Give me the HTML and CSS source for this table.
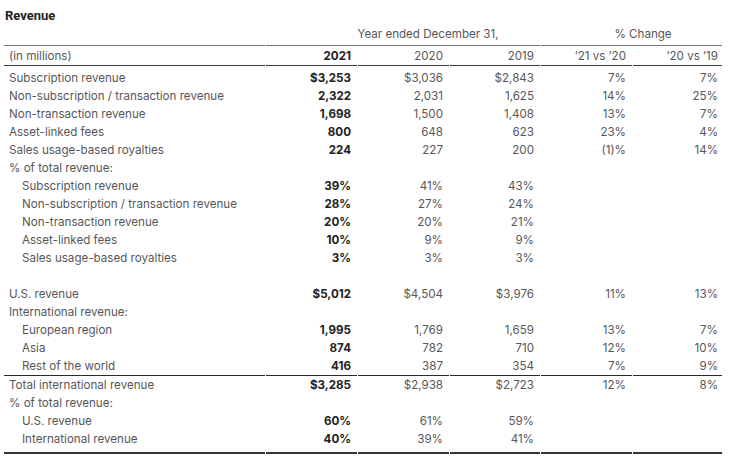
FILE: index.html
```html
<!DOCTYPE html>
<html lang="en">
<head>
<meta charset="utf-8">
<title>Revenue</title>
<link rel="stylesheet" href="styles.css">
</head>
<body>
<div class="page">
  <h1 class="title">Revenue</h1>
  <table class="fin">
    <colgroup>
      <col class="c-label"><col class="c-a"><col class="c-a"><col class="c-b"><col class="c-a"><col class="c-c">
    </colgroup>
    <thead>
      <tr class="group-row">
        <th></th>
        <th colspan="3" class="center years">Year ended December 31,</th>
        <th colspan="2" class="center change">% Change</th>
      </tr>
      <tr class="year-row">
        <th class="label">(in millions)</th>
        <th class="bold">2021</th>
        <th>2020</th>
        <th>2019</th>
        <th>’21 vs ’20</th>
        <th>’20 vs ’19</th>
      </tr>
    </thead>
    <tbody>
      <tr class="first"><td class="label">Subscription revenue</td><td class="bold">$3,253</td><td>$3,036</td><td>$2,843</td><td>7%</td><td>7%</td></tr>
      <tr><td class="label">Non-subscription / transaction revenue</td><td class="bold">2,322</td><td>2,031</td><td>1,625</td><td>14%</td><td>25%</td></tr>
      <tr><td class="label">Non-transaction revenue</td><td class="bold">1,698</td><td>1,500</td><td>1,408</td><td>13%</td><td>7%</td></tr>
      <tr><td class="label">Asset-linked fees</td><td class="bold">800</td><td>648</td><td>623</td><td>23%</td><td>4%</td></tr>
      <tr><td class="label">Sales usage-based royalties</td><td class="bold">224</td><td>227</td><td>200</td><td>(1)%</td><td>14%</td></tr>
      <tr><td class="label">% of total revenue:</td><td></td><td></td><td></td><td></td><td></td></tr>
      <tr><td class="label sub">Subscription revenue</td><td class="bold">39%</td><td>41%</td><td>43%</td><td></td><td></td></tr>
      <tr><td class="label sub">Non-subscription / transaction revenue</td><td class="bold">28%</td><td>27%</td><td>24%</td><td></td><td></td></tr>
      <tr><td class="label sub">Non-transaction revenue</td><td class="bold">20%</td><td>20%</td><td>21%</td><td></td><td></td></tr>
      <tr><td class="label sub">Asset-linked fees</td><td class="bold">10%</td><td>9%</td><td>9%</td><td></td><td></td></tr>
      <tr><td class="label sub">Sales usage-based royalties</td><td class="bold">3%</td><td>3%</td><td>3%</td><td></td><td></td></tr>
      <tr><td class="label">&nbsp;</td><td></td><td></td><td></td><td></td><td></td></tr>
      <tr><td class="label">U.S. revenue</td><td class="bold">$5,012</td><td>$4,504</td><td>$3,976</td><td>11%</td><td>13%</td></tr>
      <tr><td class="label">International revenue:</td><td></td><td></td><td></td><td></td><td></td></tr>
      <tr><td class="label sub">European region</td><td class="bold">1,995</td><td>1,769</td><td>1,659</td><td>13%</td><td>7%</td></tr>
      <tr><td class="label sub">Asia</td><td class="bold">874</td><td>782</td><td>710</td><td>12%</td><td>10%</td></tr>
      <tr class="subtotal"><td class="label sub">Rest of the world</td><td class="bold">416</td><td>387</td><td>354</td><td>7%</td><td>9%</td></tr>
      <tr><td class="label">Total international revenue</td><td class="bold">$3,285</td><td>$2,938</td><td>$2,723</td><td>12%</td><td>8%</td></tr>
      <tr><td class="label">% of total revenue:</td><td></td><td></td><td></td><td></td><td></td></tr>
      <tr><td class="label sub">U.S. revenue</td><td class="bold">60%</td><td>61%</td><td>59%</td><td></td><td></td></tr>
      <tr class="last"><td class="label sub">International revenue</td><td class="bold">40%</td><td>39%</td><td>41%</td><td></td><td></td></tr>
    </tbody>
  </table>
</div>
</body>
</html>
```

FILE: styles.css
```css
html, body {
  margin: 0;
  padding: 0;
  background: #ffffff;
}

.page {
  padding: 0 0 0 3px;
  font-family: Inter, Roboto, "Liberation Sans", Arial, sans-serif;
  font-size: 11.6px;
  color: #575757;
}

.title {
  margin: 7px 0 0 2px;
  font-family: Roboto, "Liberation Sans", Arial, sans-serif;
  font-size: 13px;
  line-height: 18px;
  font-weight: 700;
  color: #222222;
}

.fin {
  table-layout: fixed;
  width: 720px;
  border-collapse: separate;
  border-spacing: 1px 0;
}

.c-label { width: 261px; }
.c-a { width: 91px; }
.c-b { width: 90px; }
.c-c { width: 89px; }

.fin th,
.fin td {
  padding: 0 6px 0 0;
  line-height: 18px;
  height: 18px;
  text-align: right;
  font-weight: 400;
  white-space: nowrap;
  vertical-align: middle;
}

.fin th:last-child,
.fin td:last-child {
  padding-right: 4px;
}

.fin th.center {
  text-align: center;
}

.fin th.years {
  padding-left: 56px;
}

.fin th.change {
  padding-left: 27px;
}

.group-row th {
  padding-bottom: 2px;
  border-bottom: 1px solid #777777;
}

.year-row th {
  padding-top: 1px;
  border-bottom: 1px solid #3a3a3a;
}

.fin .label {
  text-align: left;
  padding-left: 5px;
}

.fin .label.sub {
  padding-left: 18px;
}

.fin .bold {
  font-weight: 700;
  color: #222222;
}

.first td {
  padding-top: 3px;
}

.subtotal td {
  border-bottom: 1px solid #2a2a2a;
}

.last td {
  padding-bottom: 4px;
  border-bottom: 2px solid #333333;
}
```
